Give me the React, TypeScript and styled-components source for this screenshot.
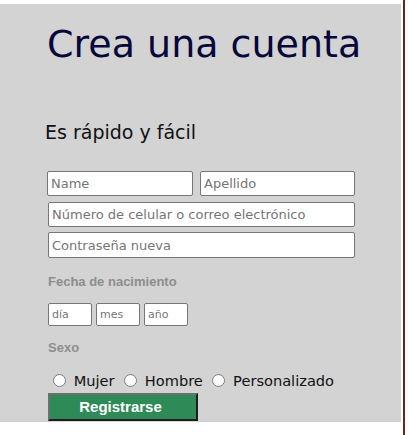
import React from "react";
import styled, { createGlobalStyle } from "styled-components";

const Global = createGlobalStyle`
  html, body { margin: 0; padding: 0; background: #ffffff; }
  body { font-family: "DejaVu Sans", sans-serif; }
`;

const Page = styled.div`
  width: 405px;
  min-height: 435px;
  box-sizing: border-box;
  padding-top: 4px;
  border-right: 2px solid #5e2a20;
`;

const Panel = styled.form`
  width: 401px;
  height: 418px;
  box-sizing: border-box;
  background: #d3d3d3;
  padding: 0 0 0 48px;
  display: flex;
  flex-direction: column;
  align-items: flex-start;
`;

const Title = styled.h1`
  margin: 18px 0 0 -1px;
  font-family: "DejaVu Sans", sans-serif;
  font-weight: normal;
  font-size: 38px;
  line-height: 44px;
  color: #07073a;
`;

const Subtitle = styled.h2`
  margin: 55px 0 0 -3px;
  font-family: "DejaVu Sans", sans-serif;
  font-weight: normal;
  font-size: 19px;
  line-height: 22px;
  color: #111111;
`;

const Row = styled.div<{ $mt: number }>`
  display: flex;
  gap: 7px;
  margin-top: ${(p) => p.$mt}px;
`;

const TextField = styled.input<{ $w: number; $h?: number; $ml?: number }>`
  box-sizing: border-box;
  width: ${(p) => p.$w}px;
  height: ${(p) => p.$h ?? 25}px;
  margin: 0 0 0 ${(p) => p.$ml ?? 0}px;
  padding: 1px 3px;
  border: 1px solid #767676;
  border-radius: 2px;
  background: #ffffff;
  font-family: "DejaVu Sans", sans-serif;
  font-size: 13px;
  color: #222;
  &::placeholder { color: #757575; }
`;

const Label = styled.div<{ $mt: number }>`
  margin-top: ${(p) => p.$mt}px;
  font-family: "Liberation Sans", Arial, sans-serif;
  font-weight: bold;
  font-size: 13px;
  line-height: 15px;
  color: #8d8d8d;
`;

const DateRow = styled.div`
  display: flex;
  gap: 4px;
  margin-top: 14px;
`;

const DateField = styled.input`
  box-sizing: border-box;
  width: 44px;
  height: 23px;
  margin: 0;
  padding: 1px 3px;
  border: 1px solid #767676;
  border-radius: 2px;
  background: #ffffff;
  font-family: "DejaVu Sans", sans-serif;
  font-size: 11px;
  &::placeholder { color: #757575; }
`;

const RadioRow = styled.div`
  margin-top: 16px;
  height: 18px;
  line-height: 18px;
  font-family: "DejaVu Sans", sans-serif;
  font-size: 14.6px;
  color: #111111;
  white-space: nowrap;
`;

const Radio = styled.input`
  width: 13px;
  height: 13px;
  margin: 3px 3px 0 5px;
  vertical-align: -1px;
`;

const Submit = styled.button`
  margin-top: 4px;
  width: 150px;
  height: 28px;
  box-sizing: border-box;
  padding: 0 5px 0 0;
  background: #2e8b57;
  border-style: solid;
  border-width: 2px;
  border-color: #6e6e6e #1e1e1e #1e1e1e #6e6e6e;
  color: #ffffff;
  font-family: "Liberation Sans", Arial, sans-serif;
  font-weight: bold;
  font-size: 15px;
  line-height: 24px;
  text-align: center;
`;

export default function App() {
  return (
    <>
      <Global />
      <Page>
        <Panel onSubmit={(e) => e.preventDefault()}>
          <Title>Crea una cuenta</Title>
          <Subtitle>Es rápido y fácil</Subtitle>
          <Row $mt={28}>
            <TextField $w={146} $ml={-1} placeholder="Name" />
            <TextField $w={155} placeholder="Apellido" />
          </Row>
          <Row $mt={6}>
            <TextField $w={307} placeholder="Número de celular o correo electrónico" />
          </Row>
          <Row $mt={5}>
            <TextField $w={307} $h={26} placeholder="Contraseña nueva" />
          </Row>
          <Label $mt={16}>Fecha de nacimiento</Label>
          <DateRow>
            <DateField placeholder="día" />
            <DateField placeholder="mes" />
            <DateField placeholder="año" />
          </DateRow>
          <Label $mt={14}>Sexo</Label>
          <RadioRow>
            <Radio type="radio" name="sexo" /> Mujer <Radio type="radio" name="sexo" /> Hombre{" "}
            <Radio type="radio" name="sexo" /> Personalizado
          </RadioRow>
          <Submit type="submit">Registrarse</Submit>
        </Panel>
      </Page>
    </>
  );
}
